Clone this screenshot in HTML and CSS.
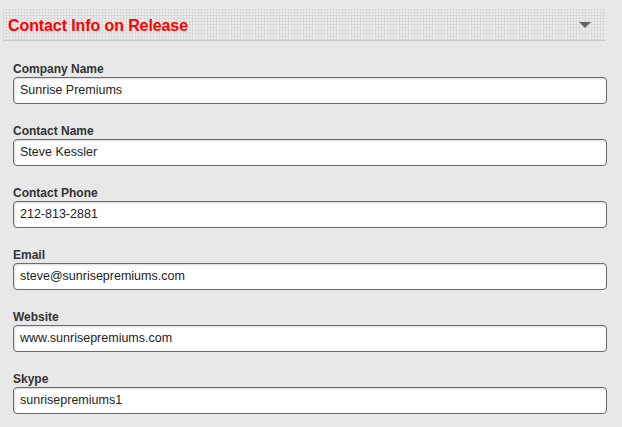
FILE: index.html
```html
<!DOCTYPE html>
<html>
<head>
<meta charset="utf-8">
<link rel="stylesheet" href="styles.css">
</head>
<body>
<div class="page">
  <div class="section-header">
    <span class="section-title">Contact Info on Release</span>
    <span class="caret"></span>
  </div>
  <form class="form">
    <div class="field">
      <label class="field-label">Company Name</label>
      <div class="field-input">Sunrise Premiums</div>
    </div>
    <div class="field">
      <label class="field-label">Contact Name</label>
      <div class="field-input">Steve Kessler</div>
    </div>
    <div class="field">
      <label class="field-label">Contact Phone</label>
      <div class="field-input">212-813-2881</div>
    </div>
    <div class="field">
      <label class="field-label">Email</label>
      <div class="field-input">steve@sunrisepremiums.com</div>
    </div>
    <div class="field">
      <label class="field-label">Website</label>
      <div class="field-input">www.sunrisepremiums.com</div>
    </div>
    <div class="field">
      <label class="field-label">Skype</label>
      <div class="field-input">sunrisepremiums1</div>
    </div>
  </form>
</div>
</body>
</html>
```
FILE: styles.css
```css
html, body {
  margin: 0;
  padding: 0;
  background: #e8e8e8;
}
.page {
  width: 622px;
  height: 427px;
  overflow: hidden;
  padding-top: 9px;
  box-sizing: border-box;
  font-family: "Liberation Sans", Arial, sans-serif;
}
.section-header {
  margin-left: 3px;
  width: 603px;
  height: 32px;
  box-sizing: border-box;
  border-bottom: 1px solid #c8c8c8;
  background-color: #ececec;
  background-image:
    linear-gradient(to right, #dadada 1px, transparent 1px),
    linear-gradient(to bottom, #dadada 1px, transparent 1px);
  background-size: 3px 3px;
  display: flex;
  align-items: center;
  justify-content: space-between;
  padding: 0 15px 0 5px;
}
.section-title {
  color: #ff0000;
  font-family: "Liberation Sans", Arial, sans-serif;
  font-weight: bold;
  font-size: 16px;
  letter-spacing: -0.1px;
  position: relative;
  top: 1px;
}
.caret {
  width: 0;
  height: 0;
  border-left: 6px solid transparent;
  border-right: 6px solid transparent;
  border-top: 6px solid #666;
}
.form {
  display: flex;
  flex-direction: column;
  gap: 20px;
  padding: 21px 15px 0 13px;
  margin: 0;
}
.field {
  display: flex;
  flex-direction: column;
}
.field-label {
  font-size: 12px;
  font-weight: bold;
  color: #333;
  line-height: 15px;
}
.field-input {
  height: 27px;
  box-sizing: border-box;
  border: 1px solid #6a6a6a;
  border-radius: 4px;
  background: #fff;
  box-shadow: inset 1px 1px 2px rgba(0,0,0,0.15);
  padding: 0 6px;
  font-size: 12.5px;
  color: #222;
  line-height: 25px;
}
```
